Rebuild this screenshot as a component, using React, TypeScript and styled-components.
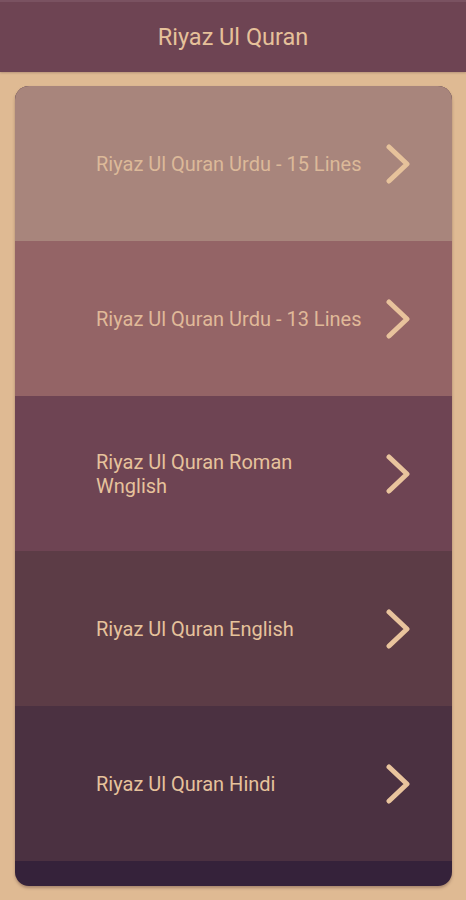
import React from "react";
import styled, { createGlobalStyle } from "styled-components";

const Global = createGlobalStyle`
  html, body { margin: 0; padding: 0; background: #dfba93; }
  body { font-family: Roboto, "Noto Sans", "Liberation Sans", sans-serif; }
  * { box-sizing: border-box; }
`;

const Page = styled.div`
  width: 466px;
  height: 900px;
  background: #dfba93;
  display: flex;
  flex-direction: column;
`;

const Header = styled.header`
  height: 72px;
  flex: none;
  background: #6e4453;
  border-top: 2px solid #7a5261;
  display: flex;
  align-items: center;
  justify-content: center;
  box-shadow: 0 1px 2px rgba(60, 30, 40, 0.25);
`;

const Title = styled.h1`
  margin: 0 0 1px;
  font-size: 23.5px;
  font-weight: 400;
  color: #e6c19a;
`;

const Card = styled.div`
  margin: 14px 14px 14px 15px;
  height: 800px;
  border-radius: 14px;
  overflow: hidden;
  display: flex;
  flex-direction: column;
  background: #35223a;
  box-shadow: 0 2px 3px rgba(70, 40, 40, 0.35);
`;

const Row = styled.div<{ $bg: string; $fg: string }>`
  height: 155px;
  flex: none;
  background: ${(p) => p.$bg};
  color: ${(p) => p.$fg};
  display: flex;
  align-items: center;
  padding: 0 41px 0 81px;
  gap: 20px;
`;

const Label = styled.span`
  flex: 1;
  font-size: 20px;
  line-height: 24px;
`;

const Chevron = ({ color }: { color: string }) => (
  <svg width="26" height="40" viewBox="0 0 26 40" fill="none">
    <path
      d="M4 3 L22 20 L4 37"
      stroke={color}
      strokeWidth="5"
      strokeLinecap="round"
      strokeLinejoin="round"
    />
  </svg>
);

const items = [
  { text: "Riyaz Ul Quran Urdu - 15 Lines", bg: "#a8857c", fg: "#dcb999", ch: "#e6c29b" },
  { text: "Riyaz Ul Quran Urdu - 13 Lines", bg: "#946466", fg: "#e0b999", ch: "#e8c29c" },
  { text: "Riyaz Ul Quran Roman Wnglish", bg: "#6e4453", fg: "#e6c29c", ch: "#e9c49d" },
  { text: "Riyaz Ul Quran English", bg: "#5c3c46", fg: "#e6c29c", ch: "#e9c49d" },
  { text: "Riyaz Ul Quran Hindi", bg: "#4b3141", fg: "#e6c29c", ch: "#e9c49d" },
];

export default function App() {
  return (
    <>
      <Global />
      <Page>
        <Header>
          <Title>Riyaz Ul Quran</Title>
        </Header>
        <Card>
          {items.map((it) => (
            <Row key={it.text} $bg={it.bg} $fg={it.fg}>
              <Label>{it.text}</Label>
              <Chevron color={it.ch} />
            </Row>
          ))}
        </Card>
      </Page>
    </>
  );
}
